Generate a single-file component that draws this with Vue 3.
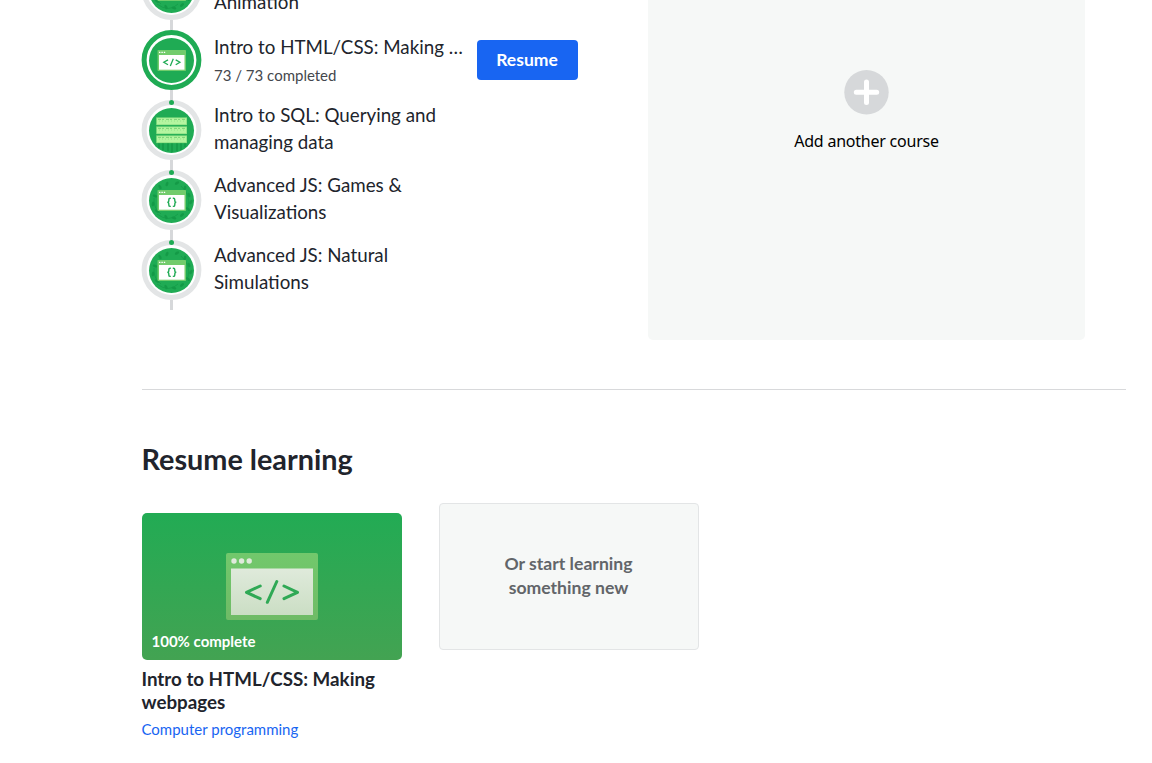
<script setup>
const courses = [
  { lines: ['\u00a0', 'Animation'], art: 'braces' },
  { lines: ['Intro to HTML/CSS: Making …'], art: 'tag', active: true, progress: '73 / 73 completed' },
  { lines: ['Intro to SQL: Querying and', 'managing data'], art: 'database' },
  { lines: ['Advanced JS: Games &', 'Visualizations'], art: 'braces' },
  { lines: ['Advanced JS: Natural', 'Simulations'], art: 'braces' },
];

// small leaves scattered around the rim of the badge
const leaves = [
  [6, 18, 20], [11, 9, 60], [18, 6, 110], [28, 5, 150], [36, 10, 100],
  [40, 17, 70], [42, 24, 120], [39, 31, 40], [33, 37, 140], [25, 40, 10],
  [17, 39, 60], [8, 33, 30], [4, 26, 100],
];
</script>

<template>
  <main>
    <section class="top">
      <ul class="courses">
        <li v-for="(course, index) in courses" :key="index" class="course" :class="{ active: course.active }">
          <div class="track">
            <svg class="badge" viewBox="0.5 0 60 60" width="60" height="60">
              <circle cx="30" cy="30" r="27.4" fill="#fff" :stroke="course.active ? '#1fab54' : '#e3e5e6'" stroke-width="5" />
              <g transform="translate(7.5 8)">
                <circle cx="22.5" cy="22.5" r="22.5" fill="#1fab54" />
                <g v-if="course.art === 'braces'" fill="#149a47">
                  <path d="M8 36Q20 45 29 36M5 20Q4 30 12 36M32 8Q42 17 39 29" fill="none" stroke="#149a47" stroke-width=".7" />
                  <ellipse
                    v-for="(leaf, i) in leaves"
                    :key="i"
                    :cx="leaf[0]"
                    :cy="leaf[1]"
                    rx="2.4"
                    ry="1.3"
                    :transform="`rotate(${leaf[2]} ${leaf[0]} ${leaf[1]})`"
                  />
                </g>
                <g v-if="course.art === 'database'">
                  <path d="M10 35v5M14 35v7M19 35v8M23 35v9M28 35v8M32 35v7M36 35v4" stroke="#149a47" stroke-width="1.6" />
                  <g v-for="y in [9.4, 18.4, 27.4]" :key="y">
                    <rect x="7.2" :y="y" width="30.8" height="7.7" fill="#8be083" />
                    <rect x="8" :y="y + 0.8" width="29.2" height="6.1" fill="#b5f5a0" />
                    <path :d="`M9 ${y + 2}H36`" stroke="#74cf70" stroke-width=".9" stroke-dasharray="3 1 2 2" />
                    <path :d="`M10 ${y + 3.6}H36`" stroke="#8be083" stroke-width=".8" stroke-dasharray="1 2" />
                  </g>
                </g>
                <g v-else>
                  <rect x="8.5" y="12" width="28.5" height="21" rx=".7" fill="#72cc6c" />
                  <rect x="10" y="17" width="25.5" height="14.7" fill="#fff" />
                  <path d="M10 14.4h1.4M12.4 14.4h1.4M14.8 14.4h1.4" stroke="#fff" stroke-width="1.4" />
                  <path
                    v-if="course.art === 'tag'"
                    d="M19 21.9 14.8 24.3 19 26.7M26.7 21.9 30.9 24.3 26.7 26.7M24.3 20.7 21.3 27.9"
                    fill="none"
                    stroke="#1fab54"
                    stroke-width="1.3"
                  />
                  <path
                    v-else
                    d="M21.8 20.2h-.6q-1.4 0-1.4 1.5v1.2q0 1.4-1.5 1.4 1.5 0 1.5 1.4v1.2q0 1.5 1.4 1.5h.6M23.8 20.2h.6q1.4 0 1.4 1.5v1.2q0 1.4 1.5 1.4-1.5 0-1.5 1.4v1.2q0 1.5-1.4 1.5h-.6"
                    fill="none"
                    stroke="#1fab54"
                    stroke-width="1.4"
                  />
                </g>
              </g>
              <circle v-if="index > 1" cx="30" cy="2.5" r="2.5" fill="#1fab54" />
            </svg>
            <span class="connector"></span>
          </div>
          <div class="course-text">
            <div v-for="line in course.lines" :key="line" class="line">{{ line }}</div>
            <div v-if="course.progress" class="progress">{{ course.progress }}</div>
          </div>
          <button v-if="course.active" class="resume">Resume</button>
        </li>
      </ul>

      <div class="add-course">
        <svg viewBox="0 0 45 45" width="45" height="45">
          <circle cx="22.5" cy="22.2" r="22.2" fill="#d6d8da" />
          <path d="M22.5 12v20.4M12.3 22.2h20.4" stroke="#fff" stroke-width="5" stroke-linecap="round" />
        </svg>
        <span>Add another course</span>
      </div>
    </section>

    <h2>Resume learning</h2>

    <section class="cards">
      <article class="learned">
        <div class="thumbnail">
          <svg viewBox="0 0 92 67" width="92" height="67">
            <defs>
              <linearGradient id="screen" x1="0" y1="0" x2="0" y2="1">
                <stop offset="0" stop-color="#dfeadb" />
                <stop offset="1" stop-color="#cbdec4" />
              </linearGradient>
              <linearGradient id="frame" x1="0" y1="0" x2="0" y2="1">
                <stop offset="0" stop-color="#72c86c" />
                <stop offset="1" stop-color="#6fbb66" />
              </linearGradient>
            </defs>
            <rect width="92" height="67" rx="2" fill="url(#frame)" />
            <rect x="5" y="15.5" width="82" height="46.5" fill="url(#screen)" />
            <g fill="#e0eadc">
              <circle cx="8" cy="8" r="2.7" />
              <circle cx="15.6" cy="8" r="2.7" />
              <circle cx="23.2" cy="8" r="2.7" />
            </g>
            <path
              d="M34.2 33 20.5 39.3 34.2 45.7M58 33 71.5 39.3 58 45.7M50.8 28.5 41.3 49.3"
              fill="none"
              stroke="#2fa955"
              stroke-width="3"
              stroke-linecap="round"
              stroke-linejoin="round"
            />
          </svg>
          <span class="complete">100% complete</span>
        </div>
        <h3>Intro to HTML/CSS: Making webpages</h3>
        <a>Computer programming</a>
      </article>
      <div class="start-new">Or start learning<br />something new</div>
    </section>
  </main>
</template>

<style>
body {
  margin: 0;
  background: #fff;
}
</style>

<style scoped>
main {
  box-sizing: border-box;
  height: 763px;
  padding: 0 26px 0 141.5px;
  overflow: hidden;
  font-family: Lato, sans-serif;
  color: #21242c;
}

.top {
  box-sizing: border-box;
  display: flex;
  justify-content: space-between;
  height: 390px;
  padding-right: 41px;
  border-bottom: 1px solid #d8d9db;
}

.courses {
  width: 436px;
  margin: -40px 0 0;
  padding: 0;
  list-style: none;
}

.course {
  display: flex;
  height: 70px;
}

.track {
  display: flex;
  flex-direction: column;
  align-items: center;
  width: 60px;
}

.badge {
  display: block;
  flex: none;
  overflow: visible;
}

.connector {
  width: 3px;
  height: 10px;
  background: #d6d8da;
}

.course-text {
  flex: 1;
  padding: 1px 0 0 12.5px;
  white-space: nowrap;
}

.active .course-text {
  padding-top: 3px;
}

.line {
  font-size: 18.75px;
  line-height: 27px;
}

.progress {
  padding-top: 3px;
  font-size: 15px;
  line-height: 24px;
  color: #44474d;
}

.resume {
  width: 101px;
  height: 40px;
  margin-top: 10px;
  padding: 0 0 1px;
  border: 0;
  border-radius: 4px;
  background: #1865f2;
  color: #fff;
  font: bold 17.5px Lato, sans-serif;
}

.add-course {
  box-sizing: border-box;
  display: flex;
  flex-direction: column;
  align-items: center;
  gap: 14px;
  width: 437px;
  height: 340px;
  padding-top: 70px;
  border-radius: 0 0 5px 5px;
  background: #f6f8f7;
  color: #000;
  font: 16px/24px 'Noto Sans', sans-serif;
  letter-spacing: -0.23px;
}

h2 {
  margin: 49px 0 24px;
  font-size: 28.8px;
  line-height: 40px;
}

.cards {
  display: flex;
  gap: 37px;
}

.learned {
  width: 260px;
  padding-top: 10px;
}

.thumbnail {
  box-sizing: border-box;
  display: flex;
  flex-direction: column;
  height: 147px;
  padding: 40px 10px 9px;
  border-radius: 5px;
  background: linear-gradient(#22ab54, #43a352);
}

.thumbnail svg {
  align-self: center;
}

.complete {
  margin-top: auto;
  color: #fff;
  font-size: 15px;
  font-weight: bold;
  line-height: 20px;
}

h3 {
  margin: 7px 0 4px;
  font-size: 18.75px;
  line-height: 23px;
}

a {
  display: block;
  color: #1865f2;
  font-size: 15px;
  line-height: 24px;
}

.start-new {
  box-sizing: border-box;
  display: flex;
  align-items: center;
  justify-content: center;
  width: 260px;
  height: 147px;
  padding-bottom: 2px;
  border: 1px solid #e3e5e6;
  border-radius: 4px;
  background: #f6f8f7;
  color: #626569;
  font-size: 17.6px;
  font-weight: bold;
  line-height: 24px;
  text-align: center;
}
</style>
